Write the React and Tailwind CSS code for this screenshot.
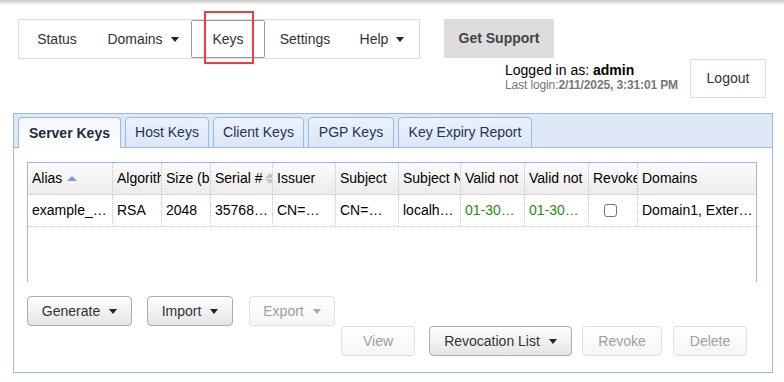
const Caret = ({ muted }) => (
  <span
    className={
      muted
        ? "inline-block w-0 h-0 border-x-[4px] border-x-transparent border-t-[5px] border-t-[#aaa]"
        : "inline-block w-0 h-0 border-x-[4px] border-x-transparent border-t-[5px] border-t-[#222]"
    }
  />
);

const Btn = ({ children, caret, disabled, className }) => (
  <div
    className={
      (disabled
        ? "border-[#e0e0e0] bg-linear-to-b from-white to-[#f5f5f5] text-[#a0a0a0] "
        : "border-[#adadad] bg-linear-to-b from-white to-[#e4e4e4] text-[#333] ") +
      "h-[30px] flex items-center justify-center gap-[9px] rounded-[4px] border " +
      className
    }
  >
    <span>{children}</span>
    {caret && <Caret muted={disabled} />}
  </div>
);

// pr values tuned so the ellipsis falls where the original grid cuts each value
const cols = [
  { w: "w-[85px]", pr: "pr-[2px]", h: "Alias", sort: "up", v: "example_server_key" },
  { w: "w-[49px]", pr: "pr-[2px]", h: "Algorithm", v: "RSA" },
  { w: "w-[49px]", pr: "pr-[2px]", h: "Size (bits)", v: "2048" },
  { w: "w-[62px]", pr: "pr-[2px]", h: "Serial #", sort: "both", v: "3576812349" },
  { w: "w-[63px]", pr: "pr-[15px]", h: "Issuer", v: "CN=localhost" },
  { w: "w-[63px]", pr: "pr-[15px]", h: "Subject", v: "CN=localhost" },
  { w: "w-[62px]", pr: "pr-[3px]", h: "Subject Name", v: "localhost" },
  { w: "w-[64px]", pr: "pr-[8px]", h: "Valid not before", v: "01-30-2025", green: true, hp: "pr-[4px]" },
  { w: "w-[64px]", pr: "pr-[8px]", h: "Valid not after", v: "01-30-2026", green: true, hp: "pr-[4px]" },
  { w: "w-[49px]", pr: "pr-0", h: "Revoked", check: true },
  { w: "w-[118px]", pr: "pr-0", h: "Domains", v: "Domain1, External", last: true },
];

const tabs = [
  { t: "Server Keys", w: "w-[103px]", active: true },
  { t: "Host Keys", w: "w-[84px]" },
  { t: "Client Keys", w: "w-[91px]" },
  { t: "PGP Keys", w: "w-[86px]" },
  { t: "Key Expiry Report", w: "w-[134px]" },
];

export default function App() {
  return (
    <div className="relative w-[784px] h-[382px] overflow-hidden bg-white font-['Liberation_Sans',Arial,sans-serif] text-[14px] text-[#333]">
      <div className="h-[5px] bg-linear-to-b from-[#c6c6c6] to-white" />

      {/* header */}
      <div className="flex pl-[18px] mt-[14px]">
        <div className="flex h-[40px] border border-[#ddd]">
          <div className="w-[76px] flex items-center justify-center">Status</div>
          <div className="w-[96px] flex items-center justify-center gap-[8px]">
            Domains <Caret />
          </div>
          <div className="w-[74px] flex items-center justify-center border border-[#9a9a9a] rounded-[2px]">Keys</div>
          <div className="w-[80px] flex items-center justify-center">Settings</div>
          <div className="w-[74px] flex items-center justify-center gap-[8px]">
            Help <Caret />
          </div>
        </div>

        <div className="ml-[24px] w-[322px] flex flex-col">
          <div className="w-[110px] h-[39px] bg-[#dddddd] flex items-center justify-center font-bold text-[#444]">
            Get Support
          </div>
          <div className="flex justify-end items-start mt-[1px]">
            <div className="mt-[3px] mr-[12px] w-[173px] text-black whitespace-nowrap">
              <div className="leading-[17px]">
                Logged in as: <b>admin</b>
              </div>
              <div className="text-[12px] leading-[13px] tracking-[-0.12px] text-[#777]">
                Last login:<b>2/11/2025, 3:31:01 PM</b>
              </div>
            </div>
            <div className="w-[76px] h-[39px] border border-[#ddd] flex items-center justify-center">Logout</div>
          </div>
        </div>
      </div>

      {/* panel */}
      <div className="ml-[13px] mt-[15px] w-[760px] h-[260px] border border-[#99bbe8]">
        <div className="h-[34px] flex items-end gap-[4px] pl-[4px] bg-[#dfe8f6] border-b border-[#99bbe8]">
          {tabs.map((t) => (
            <div
              key={t.t}
              className={
                t.active
                  ? "h-[31px] -mb-px flex items-center justify-center rounded-t-[4px] border border-b-0 border-[#99bbe8] bg-linear-to-b from-[#f4f7fc] to-white font-bold text-[#1d2a40] " + t.w
                  : "h-[31px] -mb-px flex items-center justify-center rounded-t-[4px] border border-[#99bbe8] bg-linear-to-b from-[#edf2fb] to-[#dbe6f6] text-[#1f3356] " + t.w
              }
            >
              {t.t}
            </div>
          ))}
        </div>

        <div className="px-[13px] pt-[14px]">
          <div className="w-[730px] h-[120px] border-x border-t border-[#99bbe8]">
            <div className="flex h-[32px] bg-linear-to-b from-[#fbfbfb] to-[#ececec] border-b border-[#d9d9d9] text-black">
              {cols.map((c) => (
                <div
                  key={c.h}
                  className={
                    "flex items-center pl-[4px] overflow-hidden whitespace-nowrap shrink-0 " +
                    c.w +
                    (c.hp ? " " + c.hp : "") +
                    (c.last ? "" : " border-r border-dotted border-[#c8c8c8]")
                  }
                >
                  <span className={c.hp ? "overflow-hidden" : ""}>{c.h}</span>
                  {c.sort === "up" && (
                    <span className="ml-[5px] inline-block w-0 h-0 border-x-[5px] border-x-transparent border-b-[5px] border-b-[#7c9fd3]" />
                  )}
                  {c.sort === "both" && (
                    <span className="ml-[3px] flex flex-col gap-[1px]">
                      <span className="w-0 h-0 border-x-[5px] border-x-transparent border-b-[5px] border-b-[#c4c4c4]" />
                      <span className="w-0 h-0 border-x-[5px] border-x-transparent border-t-[5px] border-t-[#c4c4c4]" />
                    </span>
                  )}
                </div>
              ))}
            </div>
            <div className="flex h-[32px] border-b border-dotted border-[#c8c8c8] text-black">
              {cols.map((c) => (
                <div
                  key={c.h}
                  className={
                    "flex items-center pl-[4px] overflow-hidden shrink-0 " +
                    c.w +
                    " " +
                    c.pr +
                    (c.last ? "" : " border-r border-dotted border-[#c8c8c8]") +
                    (c.check ? " pl-[15px]" : "") +
                    (c.green ? " text-[#2e8b12]" : "")
                  }
                >
                  {c.check ? (
                    <span className="w-[13px] h-[13px] rounded-[3px] border border-[#767676] bg-white" />
                  ) : (
                    <span className="truncate">{c.v}</span>
                  )}
                </div>
              ))}
            </div>
          </div>

          <div className="flex mt-[14px]">
            <Btn caret className="w-[105px]">Generate</Btn>
            <Btn caret className="w-[86px] ml-[15px]">Import</Btn>
            <Btn caret disabled className="w-[86px] ml-[16px]">Export</Btn>
          </div>
          <div className="flex ml-[314px]">
            <Btn disabled className="w-[74px]">View</Btn>
            <Btn caret className="w-[143px] ml-[14px]">Revocation List</Btn>
            <Btn disabled className="w-[80px] ml-[10px]">Revoke</Btn>
            <Btn disabled className="w-[74px] ml-[11px]">Delete</Btn>
          </div>
        </div>
      </div>

      {/* annotation */}
      <div className="absolute left-[204px] top-[11px] w-[50px] h-[53px] border-2 border-[#ee3d42]" />
    </div>
  );
}
